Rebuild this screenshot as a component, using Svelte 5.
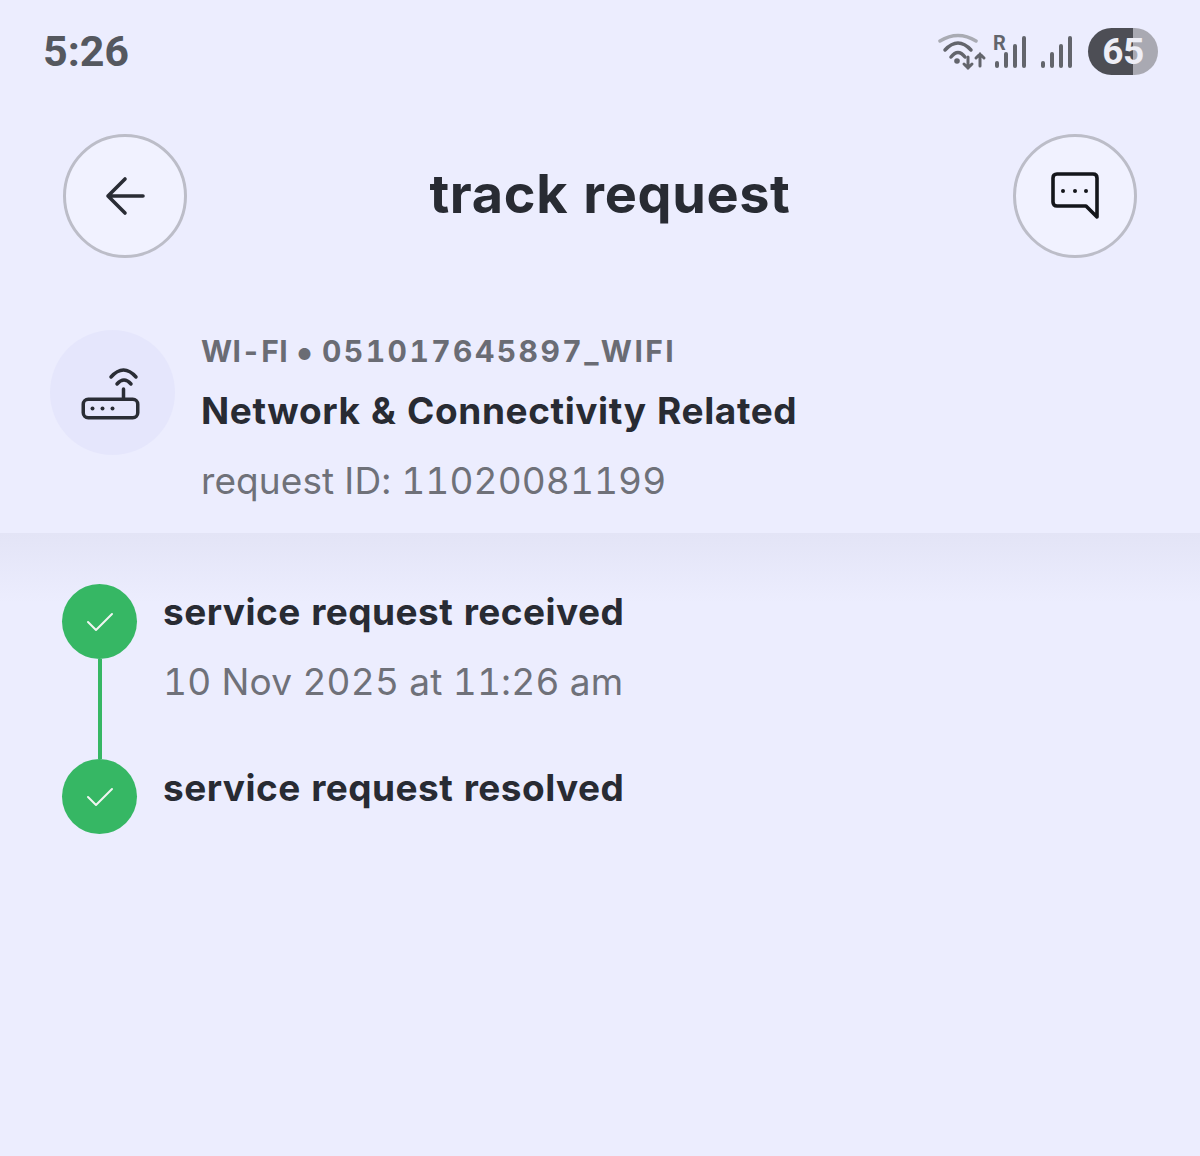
<script>
  const steps = [
    { title: 'service request received', time: '10 Nov 2025 at 11:26 am' },
    { title: 'service request resolved', time: '' }
  ];
</script>

<div class="screen">
  <div class="status">
    <span class="clock">5:26</span>
    <div class="indicators">
      <svg class="wifi" width="50" height="38" viewBox="0 0 50 38" fill="none" stroke-linecap="round">
        <path d="M2 8 Q20 -3 38 8" stroke="#a9abb3" stroke-width="3.5" />
        <path d="M7 17 Q20 3 33 17" stroke="#63656c" stroke-width="3.5" />
        <path d="M13 24 Q20 15 27 24" stroke="#63656c" stroke-width="3.5" />
        <circle cx="19" cy="28" r="2.800" fill="#63656c" />
        <path d="M30 24 V35 M26 31 L30 35 L34 31" stroke="#63656c" stroke-width="3" />
        <path d="M42 33 V21 M38 25 L42 21 L46 25" stroke="#63656c" stroke-width="3" />
      </svg>
      <div class="sim">
        <span class="roam">R</span>
        <svg width="34" height="34" viewBox="0 0 34 34" fill="#63656c">
          <rect x="0" y="26" width="4" height="7" rx="2" />
          <rect x="9" y="17" width="4" height="16" rx="2" />
          <rect x="18" y="9" width="4" height="24" rx="2" />
          <rect x="27" y="1" width="4" height="32" rx="2" />
        </svg>
      </div>
      <svg class="bars" width="32" height="33" viewBox="0 0 32 33" fill="#63656c">
        <rect x="0" y="26" width="4" height="7" rx="2" />
        <rect x="9" y="17" width="4" height="16" rx="2" />
        <rect x="18" y="9" width="4" height="24" rx="2" />
        <rect x="27" y="1" width="4" height="32" rx="2" />
      </svg>
      <div class="battery"><span>65</span></div>
    </div>
  </div>

  <header class="top">
    <button class="round" aria-label="back">
      <svg width="46" height="44" viewBox="0 0 46 44" fill="none" stroke="#2a2d35" stroke-width="3.600" stroke-linecap="round" stroke-linejoin="round">
        <path d="M41 22 H6 M23 5 L6 22 L23 39" />
      </svg>
    </button>
    <h1>track request</h1>
    <button class="round" aria-label="chat">
      <svg width="50" height="48" viewBox="0 0 50 48" fill="none" stroke="#14161b" stroke-width="3.600" stroke-linejoin="round">
        <path d="M7 2 H43 Q47 2 47 6 V45 L36 34 H7 Q3 34 3 30 V6 Q3 2 7 2 Z" />
        <circle cx="13" cy="19" r="2" fill="#14161b" stroke="none" />
        <circle cx="25" cy="19" r="2" fill="#14161b" stroke="none" />
        <circle cx="36" cy="19" r="2" fill="#14161b" stroke="none" />
      </svg>
    </button>
  </header>

  <section class="info">
    <div class="device">
      <svg width="62" height="54" viewBox="0 0 62 54" fill="none" stroke="#2a2d35" stroke-width="3.500" stroke-linecap="round">
        <path d="M30 11 Q42.500 -3 55 11" />
        <path d="M36 18 Q43 10 50 18" />
        <path d="M42.500 23 V33" />
        <rect x="2.250" y="33.250" width="54.500" height="18.500" rx="5" />
        <circle cx="11.500" cy="42.500" r="2" fill="#2a2d35" stroke="none" />
        <circle cx="21.500" cy="42.500" r="2" fill="#2a2d35" stroke="none" />
        <circle cx="31.500" cy="42.500" r="2" fill="#2a2d35" stroke="none" />
      </svg>
    </div>
    <div class="details">
      <div class="kind"><span class="type">WI-FI</span><span class="sep">•</span><span>051017645897_WIFI</span></div>
      <div class="name">Network &amp; Connectivity Related</div>
      <div class="reqid">request ID: 11020081199</div>
    </div>
  </section>

  <section class="timeline">
    {#each steps as step, i}
      <div class="step">
        <div class="rail">
          <div class="dot">
            <svg width="28" height="20" viewBox="0 0 28 20" fill="none" stroke="#f1f5f2" stroke-width="2" stroke-linecap="round" stroke-linejoin="round">
              <path d="M2 10 L10 18 L26 2" />
            </svg>
          </div>
          {#if i < steps.length - 1}
            <div class="line"></div>
          {/if}
        </div>
        <div class="copy">
          <div class="title">{step.title}</div>
          {#if step.time}
            <div class="time">{step.time}</div>
          {/if}
        </div>
      </div>
    {/each}
  </section>
</div>

<style>
  :global(body) {
    background: #ecedfe;
  }

  .screen {
    height: 1156px;
    background: #ecedfe;
    font-family: Inter, "Open Sans", sans-serif;
    font-variant-numeric: tabular-nums;
    overflow: hidden;
  }

  .status {
    height: 104px;
    box-sizing: border-box;
    padding: 25px 42px 0 43px;
    display: flex;
    justify-content: space-between;
    align-items: flex-start;
  }

  .clock {
    font-family: Roboto, sans-serif;
    font-size: 43px;
    line-height: 52px;
    font-weight: 700;
    color: #55585f;
  }

  .indicators {
    display: flex;
    align-items: center;
    padding-top: 3px;
  }

  .wifi {
    margin-right: 7px;
  }

  .sim {
    position: relative;
    width: 34px;
    height: 34px;
    margin-right: 12px;
  }

  .sim svg {
    display: block;
  }

  .roam {
    position: absolute;
    left: -2px;
    top: -2px;
    font: 700 20px/20px Roboto, sans-serif;
    color: #63656c;
  }

  .bars {
    margin-right: 15px;
  }

  .battery {
    width: 70px;
    height: 47px;
    border-radius: 24px;
    background: linear-gradient(90deg, #4d4e55 0 64%, #a9a9b2 64%);
    display: flex;
    align-items: center;
    justify-content: center;
    font: 700 37px/47px Roboto, sans-serif;
    letter-spacing: -0.5px;
    color: #eeeef6;
  }

  .top {
    height: 124px;
    margin-top: 30px;
    padding: 0 63px;
    display: flex;
    align-items: center;
    justify-content: space-between;
  }

  .round {
    width: 124px;
    height: 124px;
    box-sizing: border-box;
    border: 3px solid #bcbdc8;
    border-radius: 50%;
    background: #f1f2ff;
    padding: 0;
    display: flex;
    align-items: center;
    justify-content: center;
  }

  h1 {
    margin: 0 0 4px 20px;
    font-size: 54px;
    line-height: 60px;
    font-weight: 700;
    letter-spacing: 0.650px;
    color: #282b33;
  }

  .info {
    margin-top: 72px;
    padding: 0 50px;
    display: flex;
    align-items: flex-start;
    gap: 26px;
    height: 203px;
  }

  .device {
    width: 125px;
    height: 125px;
    border-radius: 50%;
    background: #e5e6fc;
    display: flex;
    align-items: center;
    justify-content: center;
  }

  .device svg {
    margin-right: 2px;
  }

  .details {
    margin-top: -1px;
  }

  .kind {
    display: flex;
    align-items: center;
    font-size: 30px;
    line-height: 44px;
    font-weight: 700;
    letter-spacing: 2.450px;
    white-space: nowrap;
    color: #6a6c74;
  }

  .type {
    width: 86px;
    letter-spacing: 0.400px;
  }

  .sep {
    width: 35px;
    text-align: center;
    font-size: 38px;
    letter-spacing: 0;
  }

  .name {
    font-size: 37px;
    line-height: 52px;
    margin-top: 12px;
    font-weight: 700;
    letter-spacing: 0.600px;
    color: #282b33;
  }

  .reqid {
    font-size: 37px;
    line-height: 44px;
    margin-top: 22px;
    letter-spacing: 0.100px;
    color: #6f7179;
  }

  .timeline {
    padding: 51px 62px 0;
    background: linear-gradient(180deg, #e3e4f6 0, #ecedfe 70px);
  }

  .step {
    display: flex;
    gap: 26px;
  }

  .step + .step .title {
    margin-top: 1px;
  }

  .rail {
    width: 75px;
    display: flex;
    flex-direction: column;
    align-items: center;
  }

  .dot {
    width: 75px;
    height: 75px;
    border-radius: 50%;
    background: #36b764;
    display: flex;
    align-items: center;
    justify-content: center;
  }

  .line {
    width: 4px;
    height: 100px;
    background: #36b764;
  }

  .title {
    font-size: 37px;
    line-height: 56px;
    font-weight: 700;
    letter-spacing: 0.470px;
    color: #282b33;
  }

  .time {
    font-size: 37px;
    line-height: 44px;
    margin-top: 20px;
    letter-spacing: 0.200px;
    color: #6f7179;
  }
</style>
